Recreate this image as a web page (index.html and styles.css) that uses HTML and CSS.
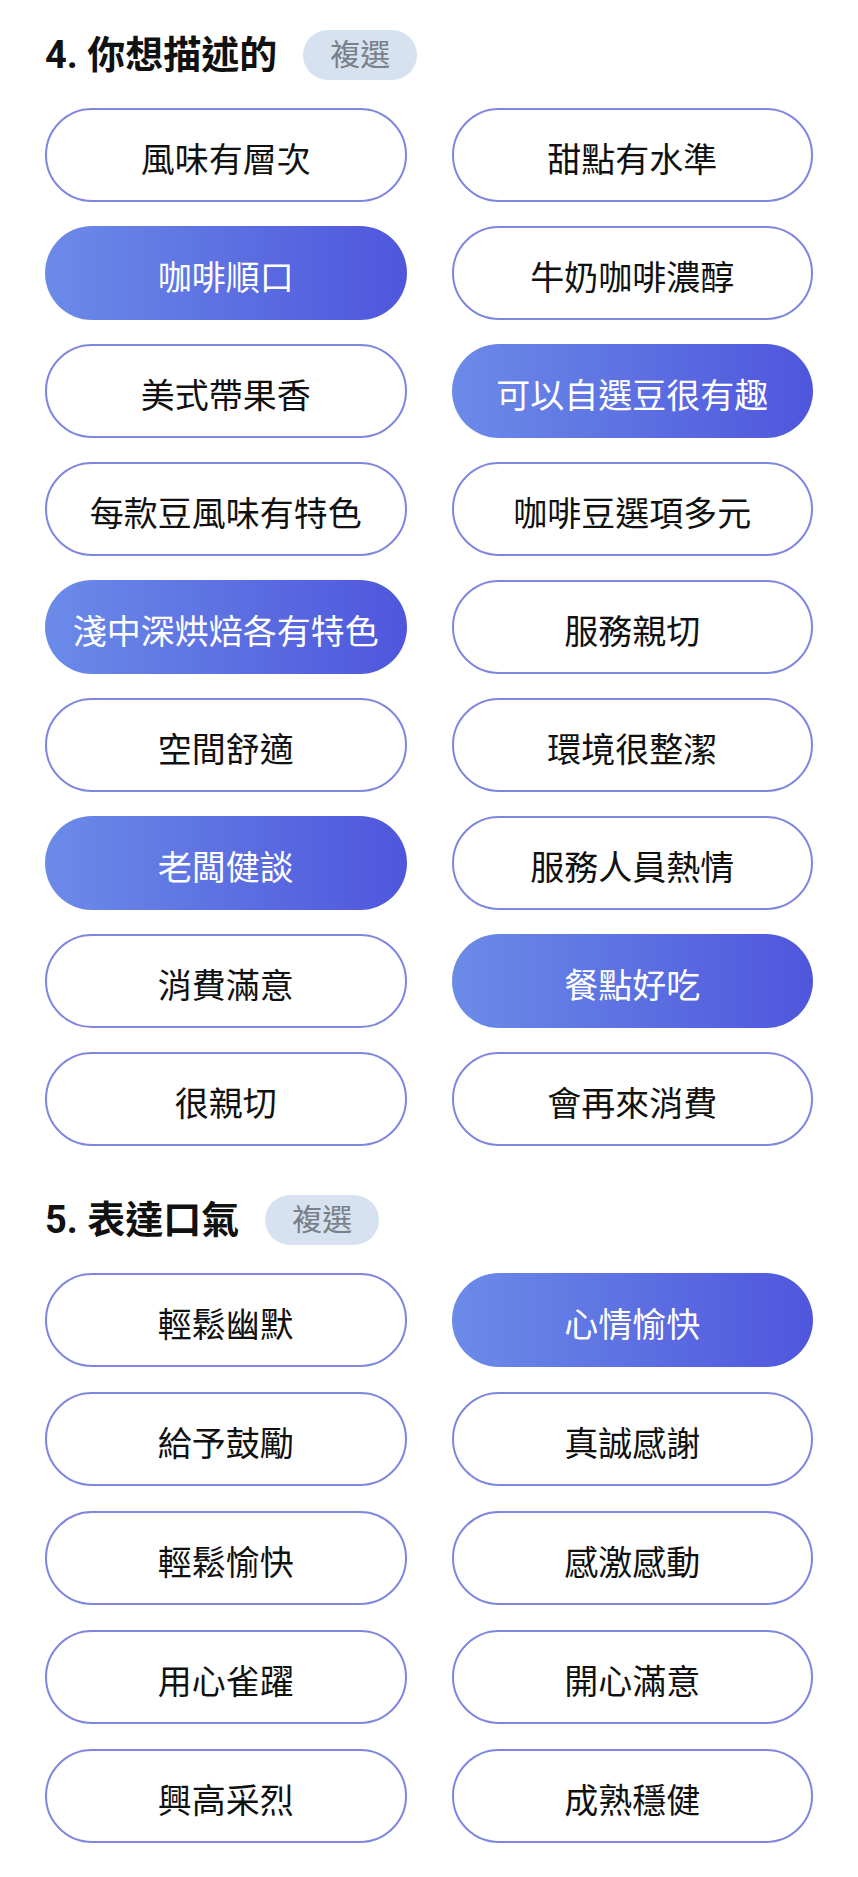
FILE: index.html
```html
<!DOCTYPE html>
<html lang="zh-Hant">
<head>
<meta charset="UTF-8">
<meta name="viewport" content="width=device-width, initial-scale=1.0">
<title>評論標籤</title>
<link rel="stylesheet" href="styles.css">
</head>
<body>
<section class="question">
    <div class="question-head">
        <h2 class="question-title">4. 你想描述的</h2>
        <span class="tag">複選</span>
    </div>
    <div class="options">
        <button class="option">風味有層次</button>
        <button class="option">甜點有水準</button>
        <button class="option selected">咖啡順口</button>
        <button class="option">牛奶咖啡濃醇</button>
        <button class="option">美式帶果香</button>
        <button class="option selected">可以自選豆很有趣</button>
        <button class="option">每款豆風味有特色</button>
        <button class="option">咖啡豆選項多元</button>
        <button class="option selected">淺中深烘焙各有特色</button>
        <button class="option">服務親切</button>
        <button class="option">空間舒適</button>
        <button class="option">環境很整潔</button>
        <button class="option selected">老闆健談</button>
        <button class="option">服務人員熱情</button>
        <button class="option">消費滿意</button>
        <button class="option selected">餐點好吃</button>
        <button class="option">很親切</button>
        <button class="option">會再來消費</button>
    </div>
</section>

<section class="question">
    <div class="question-head">
        <h2 class="question-title">5. 表達口氣</h2>
        <span class="tag">複選</span>
    </div>
    <div class="options tone">
        <button class="option">輕鬆幽默</button>
        <button class="option selected">心情愉快</button>
        <button class="option">給予鼓勵</button>
        <button class="option">真誠感謝</button>
        <button class="option">輕鬆愉快</button>
        <button class="option">感激感動</button>
        <button class="option">用心雀躍</button>
        <button class="option">開心滿意</button>
        <button class="option">興高采烈</button>
        <button class="option">成熟穩健</button>
    </div>
</section>

<script>
document.querySelectorAll('.option').forEach(function (btn) {
    btn.addEventListener('click', function () {
        btn.classList.toggle('selected');
    });
});
</script>
</body>
</html>
```

FILE: styles.css
```css
body {
    font-family: Roboto, "Noto Sans CJK TC", sans-serif;
    background: #fff;
    color: #111;
    margin: 0;
    padding: 30px 45px 0;
}
.question + .question {
    margin-top: 49px;
}
.question-head {
    display: flex;
    align-items: center;
    gap: 26px;
    height: 50px;
}
.question-title {
    margin: 0;
    font-size: 38px;
    font-weight: bold;
    line-height: 50px;
    color: #111;
}
.tag {
    height: 50px;
    line-height: 50px;
    padding: 0 27px;
    border-radius: 25px;
    background: #d7e2f0;
    color: #7a7f88;
    font-size: 30px;
}
.options {
    display: grid;
    grid-template-columns: 1fr 1fr;
    column-gap: 45px;
    row-gap: 24px;
    margin-top: 28px;
}
.options.tone {
    row-gap: 25px;
}
.option {
    height: 94px;
    border: 2px solid #7f86e0;
    border-radius: 47px;
    background: #fff;
    color: #111;
    font-family: inherit;
    font-size: 34px;
    padding: 4px 0 0;
    cursor: pointer;
}
.option.selected {
    border-color: transparent;
    background: linear-gradient(90deg, #6b8be8, #4f56dc);
    background-origin: border-box;
    color: #fff;
}
```
